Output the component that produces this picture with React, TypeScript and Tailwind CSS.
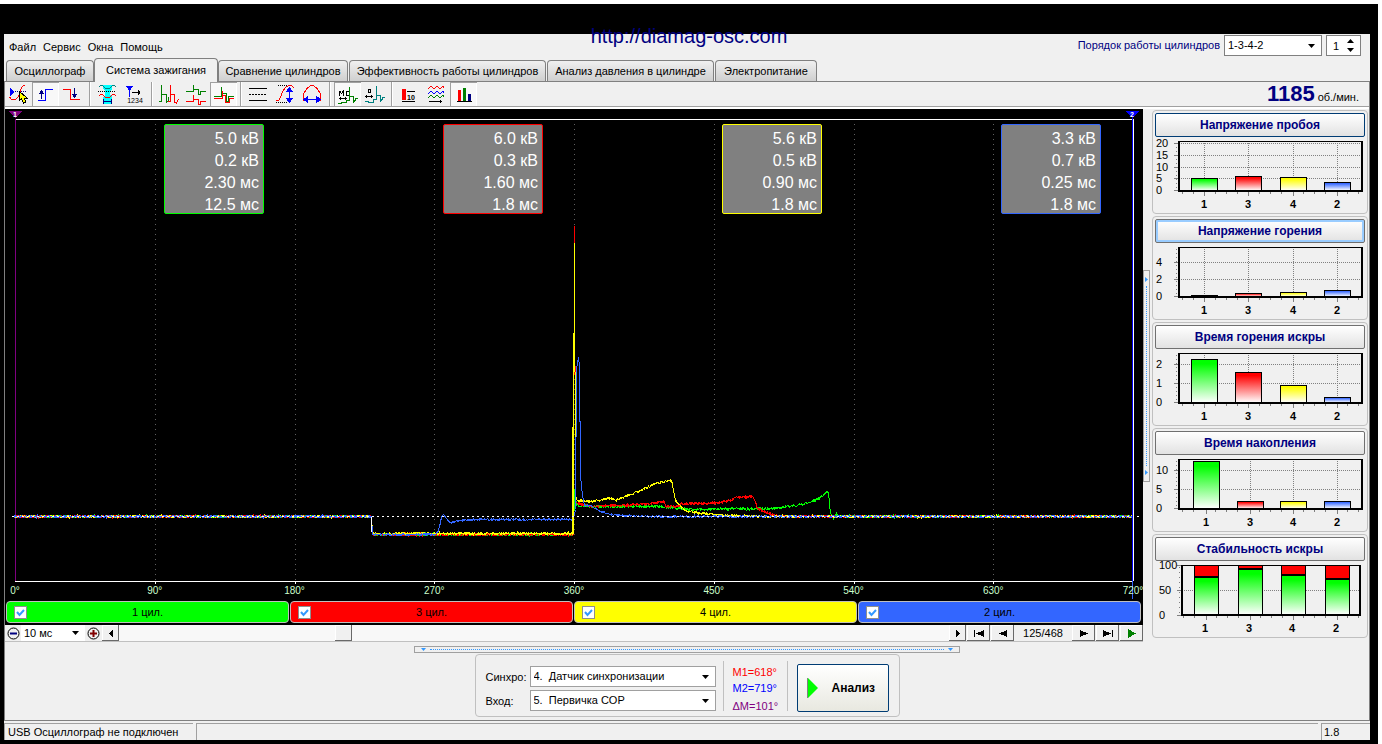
import { useState } from "react";
import type { ReactNode } from "react";

interface Point {
  x: number;
  y: number;
}

interface BarSpec {
  x: number;
  top: number;
}

interface ChartSpec {
  title: string;
  ticks: { label: string; y: number }[];
  bars: BarSpec[];
  state?: "default" | "focused";
}

interface Cylinder {
  id: string;
  label: string;
  bar: string;
  border: string;
  values: string[];
}

const TABS = [
  { label: "Осциллограф", size: "w-[88px]" },
  { label: "Система зажигания", size: "w-[124px]" },
  { label: "Сравнение цилиндров", size: "w-[130px] mr-px" },
  { label: "Эффективность работы цилиндров", size: "w-[197px] mr-px" },
  { label: "Анализ давления в цилиндре", size: "w-[167px] mr-px" },
  { label: "Электропитание", size: "w-[102px]" },
];

const CYLINDERS: Cylinder[] = [
  {
    id: "c1",
    label: "1 цил.",
    bar: "bg-[#00ff00]",
    border: "border-[#00ff00]",
    values: ["5.0 кВ", "0.2 кВ", "2.30 мс", "12.5 мс"],
  },
  {
    id: "c3",
    label: "3 цил.",
    bar: "bg-[#ff0000]",
    border: "border-[#ff0000]",
    values: ["6.0 кВ", "0.3 кВ", "1.60 мс", "1.8 мс"],
  },
  {
    id: "c4",
    label: "4 цил.",
    bar: "bg-[#ffff00]",
    border: "border-[#ffff00]",
    values: ["5.6 кВ", "0.5 кВ", "0.90 мс", "1.8 мс"],
  },
  {
    id: "c2",
    label: "2 цил.",
    bar: "bg-[#3366ff]",
    border: "border-[#3366ff]",
    values: ["3.3 кВ", "0.7 кВ", "0.25 мс", "1.8 мс"],
  },
];

const FIRING_ORDER = ["1", "3", "4", "2"];
const BAR_COLORS = ["#00ff00", "#ff0000", "#ffff00", "#3366ff"];

const CHARTS: ChartSpec[] = [
  {
    title: "Напряжение пробоя",
    state: "default",
    ticks: [
      { label: "20", y: 5 },
      { label: "15", y: 17 },
      { label: "10", y: 29 },
      { label: "5", y: 40 },
      { label: "0", y: 52 },
    ],
    bars: [
      { x: 49, top: 40 },
      { x: 93, top: 38 },
      { x: 138, top: 39 },
      { x: 182, top: 44 },
    ],
  },
  {
    title: "Напряжение горения",
    state: "focused",
    ticks: [
      { label: "4", y: 18 },
      { label: "2", y: 35 },
      { label: "0", y: 52 },
    ],
    bars: [
      { x: 49, top: 51 },
      { x: 93, top: 49 },
      { x: 138, top: 48 },
      { x: 182, top: 46 },
    ],
  },
  {
    title: "Время горения искры",
    ticks: [
      { label: "2", y: 14 },
      { label: "1", y: 33 },
      { label: "0", y: 52 },
    ],
    bars: [
      { x: 49, top: 9 },
      { x: 93, top: 22 },
      { x: 138, top: 35 },
      { x: 182, top: 47 },
    ],
  },
  {
    title: "Время накопления",
    ticks: [
      { label: "10", y: 14 },
      { label: "5", y: 33 },
      { label: "0", y: 52 },
    ],
    bars: [
      { x: 51, top: 5 },
      { x: 95, top: 45 },
      { x: 138, top: 45 },
      { x: 182, top: 45 },
    ],
  },
];

const STABILITY: BarSpec[] = [
  { x: 50, top: 15 },
  { x: 94, top: 7 },
  { x: 137, top: 13 },
  { x: 181, top: 17 },
];

const AXIS = [0, 90, 180, 270, 360, 450, 540, 630, 720];

// Key points of every trace in plot units, noise is added between them
const TRACES: { color: string; noise: number; points: number[][] }[] = [
  {
    color: "#00ff00",
    noise: 1.3,
    points: [
      [8, 407], [366, 407], [367, 425], [568, 425], [569, 380], [571, 396], [588, 397], [655, 397],
      [690, 400], [765, 399], [792, 396], [805, 393], [815, 388], [822, 382], [823, 384], [825, 404],
      [828, 409], [831, 404], [835, 407], [1128, 407],
    ],
  },
  {
    color: "#ff0000",
    noise: 1.3,
    points: [
      [8, 407], [366, 407], [367, 425], [568, 425], [569, 117], [570, 392], [572, 394], [588, 397],
      [615, 396], [645, 394], [659, 392], [660, 397], [673, 397], [675, 394], [700, 394], [715, 393],
      [726, 391], [730, 388], [747, 387], [749, 390], [752, 399], [760, 403], [770, 406], [785, 407],
      [1128, 407],
    ],
  },
  {
    color: "#ffff00",
    noise: 1.1,
    points: [
      [8, 407], [366, 407], [367, 424], [568, 424], [568, 320], [569, 134], [570, 386], [572, 391],
      [585, 392], [605, 389], [610, 391], [625, 385], [635, 381], [650, 374], [663, 371], [666, 371],
      [667, 375], [670, 391], [673, 395], [680, 401], [695, 404], [725, 406], [755, 407], [1128, 407],
    ],
  },
  {
    color: "#3366ff",
    noise: 0.9,
    points: [
      [8, 407], [366, 407], [367, 425], [430, 425], [433, 421], [436, 408], [438, 405], [441, 409],
      [445, 413], [455, 411], [470, 410], [568, 410], [570, 400], [571, 260], [573, 248], [574, 256],
      [575, 366], [577, 386], [579, 396], [585, 396], [595, 402], [607, 405], [635, 407], [1128, 407],
    ],
  },
];

// Small deterministic generator, so the traces are the same on every render
function makeRandom(seed: number) {
  let s = seed;
  return () => {
    s = (s * 16807) % 2147483647;
    return s / 2147483647;
  };
}

function tracePath(points: number[][], noise: number, seed: number) {
  const random = makeRandom(seed);
  const out: Point[] = [];
  for (let i = 0; i < points.length - 1; i++) {
    const [x0, y0] = points[i];
    const [x1, y1] = points[i + 1];
    out.push({ x: x0, y: y0 });
    for (let x = x0 + 1; x < x1; x++) {
      const y = y0 + ((y1 - y0) * (x - x0)) / (x1 - x0);
      // two samples per column give the trace its thickness
      out.push({ x, y: Math.round(y + (random() - 0.5) * 2 * noise) });
      out.push({ x, y: Math.round(y + (random() - 0.5) * 2 * noise) });
    }
  }
  return "M" + out.map((p) => `${p.x + 0.5} ${p.y + 0.5}`).join("L");
}

function DropArrow() {
  return (
    <svg
      viewBox="0 0 7 4"
      className="pointer-events-none absolute right-1.5 top-1/2 h-1 w-[7px] -translate-y-1/2"
    >
      <path d="M0 0h7L3.500 4z" fill="#000" />
    </svg>
  );
}

interface DropProps {
  id: string;
  label?: string;
  options: string[];
  className: string;
}

function Drop({ id, label, options, className }: DropProps) {
  return (
    <span className={`relative block bg-white ${className}`}>
      <select
        id={id}
        aria-label={label}
        className="block h-full w-full appearance-none bg-transparent pl-[3px] pr-4 outline-none"
      >
        {options.map((o) => (
          <option key={o}>{o}</option>
        ))}
      </select>
      <DropArrow />
    </span>
  );
}

function Separator() {
  return (
    <div className="flex w-2 justify-center">
      <div className="h-full w-px bg-[#a0a0a0]" />
      <div className="h-full w-px bg-white" />
    </div>
  );
}

interface ToolProps {
  title: string;
  pressed?: boolean;
  children: ReactNode;
}

function Tool({ title, pressed, children }: ToolProps) {
  return (
    <button
      aria-label={title}
      className={`h-6 w-[27px] ${
        pressed ? "bg-[#f8f8f8] shadow-[inset_1px_1px_0_#a0a0a0,inset_-1px_0_0_#fff]" : ""
      }`}
    >
      <svg
        viewBox="0 0 27 24"
        className="block h-6 w-[27px]"
        fill="none"
        stroke="#000"
        shapeRendering="crispEdges"
      >
        {children}
      </svg>
    </button>
  );
}

function Toolbar() {
  return (
    <div className="flex h-6">
      <Tool title="Маркер">
        <path d="M5 6v8l5-4z" fill="#00f" stroke="none" />
        <path d="M10 9.500h11" stroke="#000080" strokeDasharray="1 1" />
        <path d="M4.500 15l2 2.500h4l3-3 2-5 1-4 3-2.500" stroke="#f00" />
        <path d="M14.500 9.500v9l2-1.500 2 4 2.500-1-2-4h3z" fill="#ff0" />
      </Tool>
      <Tool title="Фронт" pressed>
        <path d="M6 18.500h7.500v-11H21" stroke="#00f" />
        <path d="M9.500 10v7" stroke="#000080" />
        <path d="M9.500 8l-3 4h6z" fill="#000080" stroke="none" />
      </Tool>
      <Tool title="Спад">
        <path d="M4 7.500h7.500v10H21" stroke="#f00" />
        <path d="M15.500 6v7" stroke="#000080" />
        <path d="M15.500 16l-3-4h6z" fill="#000080" stroke="none" />
      </Tool>
      <Separator />
      <Tool title="Период">
        <path d="M9 3h9v4l-2 2v4l2 2v7H9v-7l2-2V9L9 7z" fill="#0ff" stroke="none" />
        <path d="M4.500 5.500l2-2h2l3 3h4l3-3h2l2 2" stroke="#008080" />
        <path d="M4 9.500h18" strokeDasharray="1 1" />
        <path d="M4.500 14.500l2-2h2l3 3h4l3-3h2l2 2" stroke="#f00" />
        <path d="M9.500 17v5M17.500 17v5M10 19.500h7" stroke="#000080" />
      </Tool>
      <Tool title="Нумерация">
        <path d="M5 4h7l-3.500 5z" fill="#00f" stroke="none" />
        <path d="M8.500 8v7" stroke="#00f" />
        <path d="M11 10.500h8M17.500 8v5M18.500 9v3" />
        <text x="14" y="21" textAnchor="middle" fontSize="7" fill="#000" stroke="none">
          1234
        </text>
      </Tool>
      <Separator />
      <Tool title="Последовательно">
        <path d="M3 19.500h2.500V3v9.500h5V20l2-1v-4" stroke="#008000" />
        <path d="M12 19.500h2.500V3v9.500h4V20l2 1 2-4" stroke="#f00" />
      </Tool>
      <Tool title="Раздельно">
        <path d="M3 9.500h7.500V3v4.500h5V12h2V9.500h5" stroke="#008000" />
        <path d="M3 19.500h7.500V13v4.500h5V22h2v-2.500h5" stroke="#f00" />
      </Tool>
      <Tool title="Наложение" pressed>
        <path d="M4 14.500h7.500V5v6.500h5V19h2v-4.500h5" stroke="#008000" />
        <path d="M4 16.500h8.500V9v4.500h3V20h4v-3.500h4" stroke="#f00" />
      </Tool>
      <Separator />
      <Tool title="Линии">
        <path d="M4 6.500h18M4 18.500h18" />
        <path d="M4 12.500h18" strokeDasharray="2 1" />
      </Tool>
      <Tool title="Амплитуда">
        <path d="M6 3.500h10M4 20.500h12" strokeDasharray="1 1" />
        <path d="M3.500 18.500h3l2-3 2-6 3-4 3-2h3l3 3" stroke="#f00" />
        <path d="M17.500 8v10" stroke="#00f" />
        <path d="M17.500 5l-4 5h8zM17.500 21l-4-5h8z" fill="#00f" stroke="none" />
      </Tool>
      <Tool title="Ширина">
        <path d="M4.500 19v-7l3-5 4-3.500h3l4 3.500 3 5v7" stroke="#f00" />
        <path d="M8 17.500h10" stroke="#00f" />
        <path d="M4 17.500l5-4v8zM22 17.500l-5-4v8z" fill="#00f" stroke="none" />
      </Tool>
      <Separator />
      <Tool title="Миллисекунды" pressed>
        <path d="M5.500 14V9M6 9.500l1.500 2L9.500 9v5M15 9.500h-2.500v4H15M5 16.500h8M6.500 15v3M11.500 15v3" />
        <path d="M4 21.500h3v-1h5v-2h3.500V5v9.500h4V20l2-2v-2h2" stroke="#008000" />
      </Tool>
      <Tool title="Градусы">
        <path d="M7.500 7.500h2v3h-2z" />
        <path d="M4 14.500h8M5.500 13v3M10.500 13v3" />
        <path d="M4 19.500h3v1h5v-3h3.500V4v9.500h4V19l2-2v-2h2" stroke="#008080" />
      </Tool>
      <Separator />
      <Tool title="Значения">
        <path d="M6 7h4v11H6z" fill="#f00" stroke="none" />
        <path d="M11 9.500h8M6 19.500h13" />
        <text x="11" y="18" fontSize="7" fontWeight="700" fill="#000" stroke="none">
          10
        </text>
      </Tool>
      <Tool title="Осциллограммы">
        <path d="M5 6.500l3-2 3 2 3-2 3 2 3-2 1 1" stroke="#f00" />
        <path d="M5 11.500l3-2 3 2 3-2 3 2 3-2 1 1" stroke="#00f" />
        <path d="M5 15.500l3-2 3 2 3-2 3 2 3-2 1 1" stroke="#008000" />
        <path d="M6 19.500h13M17.500 18v3" />
      </Tool>
      <Tool title="Диаграммы" pressed>
        <path d="M8 8h3v11H8z" fill="#f00" stroke="none" />
        <path d="M13 6h3v13h-3z" fill="#008000" stroke="none" />
        <path d="M18 12h3v7h-3z" fill="#000080" stroke="none" />
        <path d="M7 19.500h15" />
      </Tool>
    </div>
  );
}

function Scope() {
  return (
    <div className="relative">
      <svg
        viewBox="0 0 1138 474"
        preserveAspectRatio="none"
        className="block h-[474px] w-full overflow-visible"
        shapeRendering="crispEdges"
        fill="none"
      >
        {AXIS.slice(1, 8).map((deg) => {
          const x = 10.5 + Math.round((deg / 720) * 1118);
          return (
            <g key={deg}>
              <path d={`M${x} 15V472`} stroke="#606060" strokeDasharray="1 4" />
              <path d={`M${x} 472v3`} stroke="#fff" />
            </g>
          );
        })}
        <path d="M10 10.500H1128M10 472.500H1128" stroke="#fff" />
        <path d="M10.500 10V472" stroke="#800080" />
        {TRACES.map((t, i) => (
          <path key={t.color} d={tracePath(t.points, t.noise, 97 + i * 31)} stroke={t.color} />
        ))}
        <path d="M568 318V425" stroke="#ffff00" strokeWidth="2" />
        <path d="M366.500 408V423" stroke="#fff" />
        <path d="M7 407.500H1134" stroke="#fff" strokeDasharray="2 3" />
        <path d="M1127.500 8V490" stroke="#3366ff" />
        <path d="M1127.500 8V472" stroke="#00f" />
        <path d="M1128.500 10V472" stroke="#fff" />
        <path d="M3 2h15l-7.500 7z" fill="#800080" />
        <path d="M1120 2h15l-7.500 7z" fill="#00f" />
        <text x="10" y="8" textAnchor="middle" fontSize="7" fontWeight="700" fill="#fff">
          1
        </text>
        <text x="1127" y="8" textAnchor="middle" fontSize="7" fontWeight="700" fill="#fff">
          2
        </text>
      </svg>

      {/* Readouts over the traces */}
      <div className="absolute left-2.5 right-3 top-[15px] grid grid-cols-4">
        {CYLINDERS.map((c) => (
          <div
            key={c.id}
            className={`mr-[30px] h-[90px] w-[100px] justify-self-end rounded-xs border bg-[#808080] pr-1
                        pt-[3px] text-right text-base leading-[22px] text-white ${c.border}`}
          >
            {c.values.map((v) => (
              <div key={v}>{v}</div>
            ))}
          </div>
        ))}
      </div>

      <div className="flex h-[18px] justify-between px-2.5 pt-0.5 text-[10px] leading-3 text-[#ccffcc]">
        {AXIS.map((deg) => (
          <span key={deg} className="flex w-0 justify-center">
            {deg}°
          </span>
        ))}
      </div>
    </div>
  );
}

function CylinderBars() {
  const [enabled, setEnabled] = useState<Record<string, boolean>>({
    c1: true,
    c3: true,
    c4: true,
    c2: true,
  });

  return (
    <div className="grid grid-cols-4 gap-px pb-0.5 pl-px pr-0.5">
      {CYLINDERS.map((c) => (
        <label
          key={c.id}
          className={`relative flex h-[22px] items-center justify-center rounded border
                      border-[#c0c0c0] text-black ${c.bar}`}
        >
          <input
            type="checkbox"
            checked={enabled[c.id]}
            onChange={() => setEnabled({ ...enabled, [c.id]: !enabled[c.id] })}
            className="absolute left-[7px] size-[13px] appearance-none border border-[#8e8f8f] bg-white"
          />
          {enabled[c.id] && (
            <svg viewBox="0 0 13 13" className="pointer-events-none absolute left-[7px] size-[13px]">
              <path d="M3 6l2.500 3L10 4" fill="none" stroke="#3399ff" strokeWidth="2" />
            </svg>
          )}
          {c.label}
        </label>
      ))}
    </div>
  );
}

interface NavProps {
  title: string;
  width: string;
  children: ReactNode;
}

function NavButton({ title, width, children }: NavProps) {
  return (
    <button
      aria-label={title}
      className={`flex h-4 items-center justify-center bg-[#f0f0f0]
                  shadow-[inset_-1px_-1px_0_#696969,inset_1px_1px_0_#fff] ${width}`}
    >
      <svg viewBox="0 0 12 9" className="h-[9px] w-3" shapeRendering="crispEdges">
        {children}
      </svg>
    </button>
  );
}

function ScrollRow() {
  return (
    <div className="flex h-[17px] border-b border-[#c0c0c0] bg-[#f0f0f0]">
      <button aria-label="Уменьшить" className="flex h-4 w-4 items-center justify-center">
        <svg viewBox="0 0 13 13" className="size-[13px]" fill="none">
          <circle cx="6.500" cy="6.500" r="5.500" stroke="#000" />
          <path d="M3 6.500h7" stroke="#000080" strokeWidth="2" />
        </svg>
      </button>
      <Drop id="sweep" label="Развёртка" options={["10 мс"]} className="h-4 w-16" />
      <button aria-label="Увеличить" className="flex h-4 w-[17px] items-center justify-center">
        <svg viewBox="0 0 13 13" className="size-[13px]" fill="none">
          <circle cx="6.500" cy="6.500" r="5.500" stroke="#000" />
          <path d="M3 6.500h7M6.500 3v7" stroke="#800000" strokeWidth="2" />
        </svg>
      </button>
      <NavButton title="Влево" width="w-[17px]">
        <path d="M8 1v7L4 4.500z" />
      </NavButton>
      <div className="flex-1 bg-[#f8f8f8]">
        <div className="ml-[26%] h-4 w-[17px] bg-[#f0f0f0] shadow-[inset_-1px_-1px_0_#696969,inset_1px_1px_0_#fff]" />
      </div>
      <div className="flex gap-px">
        <NavButton title="Вправо" width="w-[17px]">
          <path d="M4 1v7l4-3.500z" />
        </NavButton>
        <NavButton title="Первый кадр" width="w-[23px]">
          <path d="M1 1h1v7H1zM11 1v7L3 4.500z" />
        </NavButton>
        <NavButton title="Предыдущий кадр" width="w-[23px]">
          <path d="M10 1v7L2 4.500z" />
        </NavButton>
        <span className="w-14 text-center leading-4">125/468</span>
        <NavButton title="Следующий кадр" width="w-[23px]">
          <path d="M2 1v7l8-3.500z" />
        </NavButton>
        <NavButton title="Последний кадр" width="w-[23px]">
          <path d="M10 1h1v7h-1zM1 1v7l8-3.500z" />
        </NavButton>
        <NavButton title="Воспроизвести" width="w-[23px]">
          <path d="M2 0v9l8-4.500z" fill="#008000" />
        </NavButton>
      </div>
    </div>
  );
}

interface FrameProps {
  title: string;
  state?: "default" | "focused";
  children: ReactNode;
}

function ChartFrame({ title, state, children }: FrameProps) {
  const look =
    state === "default"
      ? "border-[#003c74]"
      : state === "focused"
      ? "border-[#707070] shadow-[inset_0_0_0_2px_#99ccff]"
      : "border-[#707070]";
  return (
    <section className="rounded border border-[#c0c0c0] px-0.5 pb-px pt-0.5">
      <button
        className={`block h-6 w-full rounded-xs border bg-linear-to-b from-white to-[#e2e2e2]
                    text-xs font-bold text-[#000080] ${look}`}
      >
        {title}
      </button>
      <svg
        viewBox="0 0 210 74"
        className="mt-px block h-[74px] w-full overflow-visible"
        fontSize="11"
        shapeRendering="crispEdges"
      >
        {children}
      </svg>
    </section>
  );
}

function ParameterChart({ title, ticks, bars, state }: ChartSpec) {
  return (
    <ChartFrame title={title} state={state}>
      <defs>
        {BAR_COLORS.map((color, i) => (
          <linearGradient key={color} id={`fill${i}`} x1="0" y1="0" x2="0" y2="1">
            <stop offset="0.1" stopColor={color} />
            <stop offset="1" stopColor="#fff" />
          </linearGradient>
        ))}
      </defs>
      {ticks.map((t) => (
        <g key={t.label}>
          <path d={`M19 ${t.y + 0.5}h4`} stroke="#808080" />
          <path d={`M24 ${t.y + 0.5}H207`} stroke="#808080" strokeDasharray="1 1" />
          <text x="1" y={t.y + 4}>
            {t.label}
          </text>
        </g>
      ))}
      <path d="M21.500 5V52" stroke="#808080" strokeDasharray="1 3" />
      <path
        d="M27.500 54v2M38.500 54v2M60.500 54v2M71.500 54v2M82.500 54v2M104.500 54v2M115.500 54v2M126.500 54v2M148.500 54v2M159.500 54v2M170.500 54v2M192.500 54v2M203.500 54v2"
        stroke="#808080"
      />
      {bars.map((b, i) => (
        <g key={b.x}>
          <path d={`M${b.x + 0.5} 5V52`} stroke="#808080" strokeDasharray="1 1" />
          <path d={`M${b.x + 0.5} 54v4`} stroke="#808080" />
          <rect
            x={b.x - 12.5}
            y={b.top + 0.5}
            width="26"
            height={52 - b.top}
            fill={`url(#fill${i})`}
            stroke="#000"
          />
          <text x={b.x} y="70" textAnchor="middle" fontWeight="700">
            {FIRING_ORDER[i]}
          </text>
        </g>
      ))}
      <path d="M23 3.500H208" stroke="#000" />
      <path d="M24 3V53H207V3" fill="none" stroke="#000" strokeWidth="2" />
    </ChartFrame>
  );
}

function StabilityChart() {
  return (
    <ChartFrame title="Стабильность искры">
      {[
        { label: "100", y: 3 },
        { label: "50", y: 28 },
        { label: "0", y: 53 },
      ].map((t) => (
        <g key={t.label}>
          <path d={`M22 ${t.y + 0.5}h4`} stroke="#808080" />
          <path d={`M27 ${t.y + 0.5}H205`} stroke="#808080" strokeDasharray="1 1" />
          <text x="4" y={t.y + 4}>
            {t.label}
          </text>
        </g>
      ))}
      <path d="M24.500 5V52" stroke="#808080" strokeDasharray="1 4" />
      <path
        d="M28.500 54v2M39.500 54v2M61.500 54v2M72.500 54v2M83.500 54v2M105.500 54v2M116.500 54v2M127.500 54v2M148.500 54v2M159.500 54v2M170.500 54v2M192.500 54v2M203.500 54v2"
        stroke="#808080"
      />
      {STABILITY.map((b, i) => (
        <g key={b.x}>
          <path d={`M${b.x + 1.5} 54v4`} stroke="#808080" />
          <rect x={b.x - 10.5} y="3.500" width="24" height={b.top - 4} fill="#ff0000" stroke="#000" />
          <rect
            x={b.x - 10.5}
            y={b.top + 0.5}
            width="24"
            height={52 - b.top}
            fill="url(#fill0)"
            stroke="#000"
          />
          <path d={`M${b.x - 11} ${b.top}h25`} stroke="#000" strokeWidth="2" />
          <text x={b.x} y="70" textAnchor="middle" fontWeight="700">
            {FIRING_ORDER[i]}
          </text>
        </g>
      ))}
      <path d="M26 3.500H206" stroke="#000" />
      <path d="M27 3V53H205V3" fill="none" stroke="#000" strokeWidth="2" />
    </ChartFrame>
  );
}

function SourcePanel() {
  return (
    <div className="flex h-[63px] w-[425px] items-center rounded border border-[#c0c0c0] px-2.5">
      <div className="grid grid-cols-[44px_186px] items-center gap-y-[3px] pt-1.5">
        <label htmlFor="sync" className="pt-0.5">
          Синхро:
        </label>
        <Drop
          id="sync"
          options={["4.\u00a0\u00a0Датчик синхронизации"]}
          className="h-[21px] border border-[#a0a0a0]"
        />
        <label htmlFor="input" className="pt-0.5">
          Вход:
        </label>
        <Drop
          id="input"
          options={["5.\u00a0\u00a0Первичка COP"]}
          className="h-[21px] border border-[#a0a0a0]"
        />
      </div>
      <div className="ml-[7px] flex h-[50px] w-[65px] flex-col border-x border-[#c0c0c0] pl-[9px] pt-[3px] leading-4">
        <span className="text-[#ff0000]">M1=618°</span>
        <span className="text-[#0000ff]">M2=719°</span>
        <span className="mt-0.5 text-[#800080]">ΔM=101°</span>
      </div>
      <button
        className="ml-[9px] mt-1 flex h-12 flex-1 items-center gap-3.5 rounded-xs border border-[#003c74]
                   bg-linear-to-b from-white to-[#e8e8e0] pl-[9px] text-xs font-bold"
      >
        <svg viewBox="0 0 11 20" className="h-5 w-[11px]">
          <path d="M1 0l10 10L1 20z" fill="#00ff00" />
          <path d="M.5 0v20" stroke="#808080" />
        </svg>
        Анализ
      </button>
    </div>
  );
}

export default function App() {
  const [tab, setTab] = useState(TABS[1].label);

  return (
    <div className="flex min-h-screen bg-white pr-1 pt-1 font-['Liberation_Sans',Arial,sans-serif] text-[11px] text-black">
      <div className="relative flex flex-1 flex-col bg-black pb-1 pl-1 pr-2 pt-[30px]">
        <a
          href="http://diamag-osc.com"
          className="absolute left-1/2 top-5 -translate-x-1/2 text-xl leading-6 text-[#000080]"
        >
          http://diamag-osc.com
        </a>

        <div className="flex flex-1 flex-col bg-[#f0f0f0]">
          {/* Menu and firing order */}
          <div className="flex h-6 items-start justify-between pl-[5px] pr-[9px] pt-px">
            <nav className="flex gap-[7px] pt-1 leading-4">
              {["Файл", "Сервис", "Окна", "Помощь"].map((m) => (
                <button key={m}>{m}</button>
              ))}
            </nav>
            <div className="flex items-center gap-1">
              <label htmlFor="order" className="text-[#000080]">
                Порядок работы цилиндров
              </label>
              <Drop
                id="order"
                options={["1-3-4-2"]}
                className="h-[21px] w-[98px] border border-[#808080]"
              />
              <span className="relative block h-[21px] w-[35px] border border-[#808080] bg-white">
                <input
                  aria-label="Номер"
                  defaultValue="1"
                  className="block h-full w-full bg-transparent pl-1.5 outline-none"
                />
                <svg
                  viewBox="0 0 7 13"
                  className="pointer-events-none absolute right-1.5 top-[3px] h-[13px] w-[7px]"
                >
                  <path d="M0 4h7L3.500 0zM0 9h7l-3.500 4z" />
                </svg>
              </span>
            </div>
          </div>

          <div role="tablist" className="flex h-6 items-end border-b border-[#808080] pl-0.5">
            {TABS.map((t) => (
              <button
                key={t.label}
                role="tab"
                aria-selected={t.label === tab}
                onClick={() => setTab(t.label)}
                className={`rounded-t border-x border-t border-[#808080] ${t.size} ${
                  t.label === tab
                    ? "-mb-px h-6 bg-[#f0f0f0]"
                    : "h-[21px] bg-linear-to-b from-[#f0f0f0] to-[#cfcfcf]"
                }`}
              >
                {t.label}
              </button>
            ))}
          </div>

          <div className="flex flex-1 flex-col border-x border-[#808080]">
            <div className="flex items-center justify-between border-b border-[#a0a0a0] pr-2.5">
              <Toolbar />
              <div className="flex items-baseline gap-[3px]">
                <span className="text-[22px] font-bold leading-6 text-[#000080]">1185</span>
                <span>об./мин.</span>
              </div>
            </div>

            <div className="flex border-t-2 border-white pr-px">
              <div className="flex-1 bg-black">
                <Scope />
                <CylinderBars />
                <ScrollRow />
              </div>
              <div className="mr-0.5 flex w-[7px] items-center">
                <div className="flex h-[212px] w-full flex-col items-center justify-between border border-[#a0a0a0] py-1.5">
                  <svg viewBox="0 0 3 5" className="h-[5px] w-[3px]">
                    <path d="M0 0l3 2.500L0 5z" fill="#3399ff" />
                  </svg>
                  <div className="my-1 flex-1 border-l border-dotted border-[#3399ff]" />
                  <svg viewBox="0 0 3 5" className="h-[5px] w-[3px]">
                    <path d="M0 0l3 2.500L0 5z" fill="#3399ff" />
                  </svg>
                </div>
              </div>
              <aside className="flex w-[216px] flex-col gap-0.5 pt-px">
                {CHARTS.map((c) => (
                  <ParameterChart key={c.title} {...c} />
                ))}
                <StabilityChart />
              </aside>
            </div>

            <div className="flex flex-1 flex-col items-center pt-1">
              <div className="flex h-[7px] w-[546px] items-center border border-[#a0a0a0] px-1.5">
                <svg viewBox="0 0 5 3" className="h-[3px] w-[5px]">
                  <path d="M0 0h5L2.500 3z" fill="#3399ff" />
                </svg>
                <div className="mx-1 flex-1 border-t border-dotted border-[#3399ff]" />
                <svg viewBox="0 0 5 3" className="h-[3px] w-[5px]">
                  <path d="M0 0h5L2.500 3z" fill="#3399ff" />
                </svg>
              </div>
              <div className="mt-px">
                <SourcePanel />
              </div>
            </div>
          </div>

          <footer className="flex h-5 gap-[3px] border-t border-[#808080] pt-0.5 leading-4">
            <span className="w-[189px] border-l border-t border-[#a0a0a0] pl-[3px]">
              USB Осциллограф не подключен
            </span>
            <span className="flex-1 border-l border-t border-[#a0a0a0]" />
            <span className="w-[49px] border-l border-t border-[#a0a0a0] pl-0.5">1.8</span>
          </footer>
        </div>
      </div>
    </div>
  );
}
